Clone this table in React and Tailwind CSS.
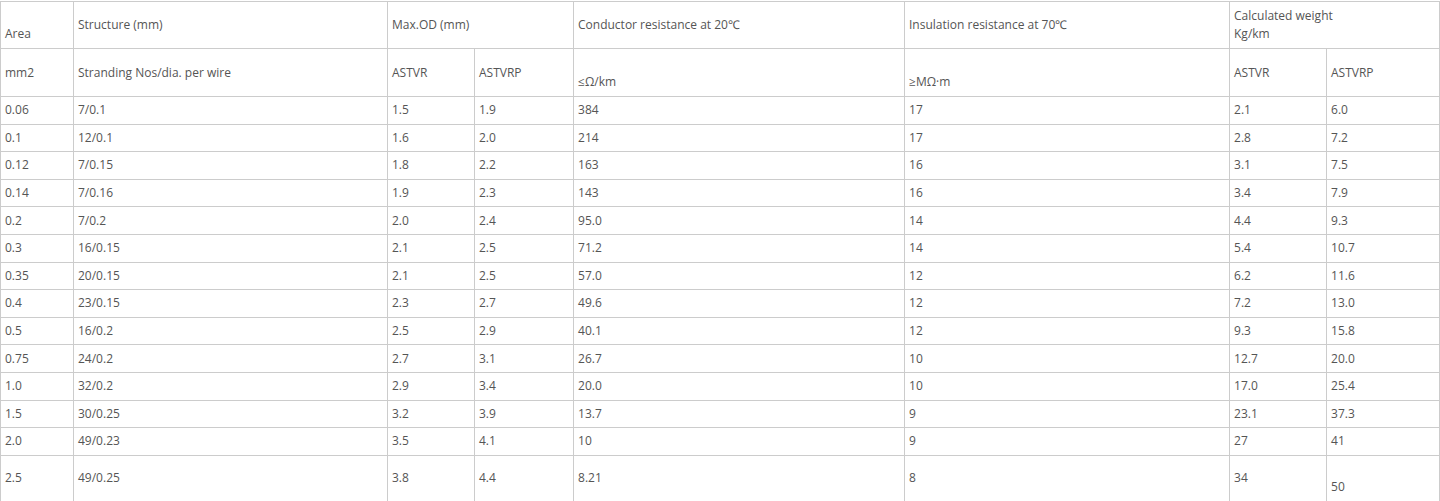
import React from "react";

const rows = [
  ["0.06", "7/0.1", "1.5", "1.9", "384", "17", "2.1", "6.0"],
  ["0.1", "12/0.1", "1.6", "2.0", "214", "17", "2.8", "7.2"],
  ["0.12", "7/0.15", "1.8", "2.2", "163", "16", "3.1", "7.5"],
  ["0.14", "7/0.16", "1.9", "2.3", "143", "16", "3.4", "7.9"],
  ["0.2", "7/0.2", "2.0", "2.4", "95.0", "14", "4.4", "9.3"],
  ["0.3", "16/0.15", "2.1", "2.5", "71.2", "14", "5.4", "10.7"],
  ["0.35", "20/0.15", "2.1", "2.5", "57.0", "12", "6.2", "11.6"],
  ["0.4", "23/0.15", "2.3", "2.7", "49.6", "12", "7.2", "13.0"],
  ["0.5", "16/0.2", "2.5", "2.9", "40.1", "12", "9.3", "15.8"],
  ["0.75", "24/0.2", "2.7", "3.1", "26.7", "10", "12.7", "20.0"],
  ["1.0", "32/0.2", "2.9", "3.4", "20.0", "10", "17.0", "25.4"],
  ["1.5", "30/0.25", "3.2", "3.9", "13.7", "9", "23.1", "37.3"],
  ["2.0", "49/0.23", "3.5", "4.1", "10", "9", "27", "41"],
];

const cell = "border border-[#cccccc] px-1 py-0 align-middle text-left font-normal";

export default function App() {
  return (
    <div className="bg-white pt-px font-['Open_Sans',sans-serif] text-[12px] leading-[18px] text-[#555555]">
      <table className="w-full table-fixed border-collapse">
        <colgroup>
          <col className="w-[73px]" />
          <col className="w-[314px]" />
          <col className="w-[87px]" />
          <col className="w-[99px]" />
          <col className="w-[331px]" />
          <col className="w-[325px]" />
          <col className="w-[97px]" />
          <col />
        </colgroup>
        <tbody>
          <tr className="h-[47px]">
            <td className={cell}>
              <br />
              Area
            </td>
            <td className={cell}>Structure (mm)</td>
            <td className={cell} colSpan={2}>Max.OD (mm)</td>
            <td className={cell}>Conductor resistance at 20℃</td>
            <td className={cell}>Insulation resistance at 70℃</td>
            <td className={cell} colSpan={2}>
              Calculated weight
              <br />
              Kg/km
            </td>
          </tr>
          <tr className="h-[48px]">
            <td className={cell}>mm2</td>
            <td className={cell}>Stranding Nos/dia. per wire</td>
            <td className={cell}>ASTVR</td>
            <td className={cell}>ASTVRP</td>
            <td className={cell}>
              <br />
              ≤Ω/km
            </td>
            <td className={cell}>
              <br />
              ≥MΩ·m
            </td>
            <td className={cell}>ASTVR</td>
            <td className={cell}>ASTVRP</td>
          </tr>
          {rows.map((r) => (
            <tr key={r[0]} className="h-[27.6px]">
              {r.map((v, i) => (
                <td key={i} className={cell}>
                  {v}
                </td>
              ))}
            </tr>
          ))}
          <tr className="h-[46px]">
            <td className={cell}>2.5</td>
            <td className={cell}>49/0.25</td>
            <td className={cell}>3.8</td>
            <td className={cell}>4.4</td>
            <td className={cell}>8.21</td>
            <td className={cell}>8</td>
            <td className={cell}>34</td>
            <td className={cell}>
              <br />
              50
            </td>
          </tr>
        </tbody>
      </table>
    </div>
  );
}
